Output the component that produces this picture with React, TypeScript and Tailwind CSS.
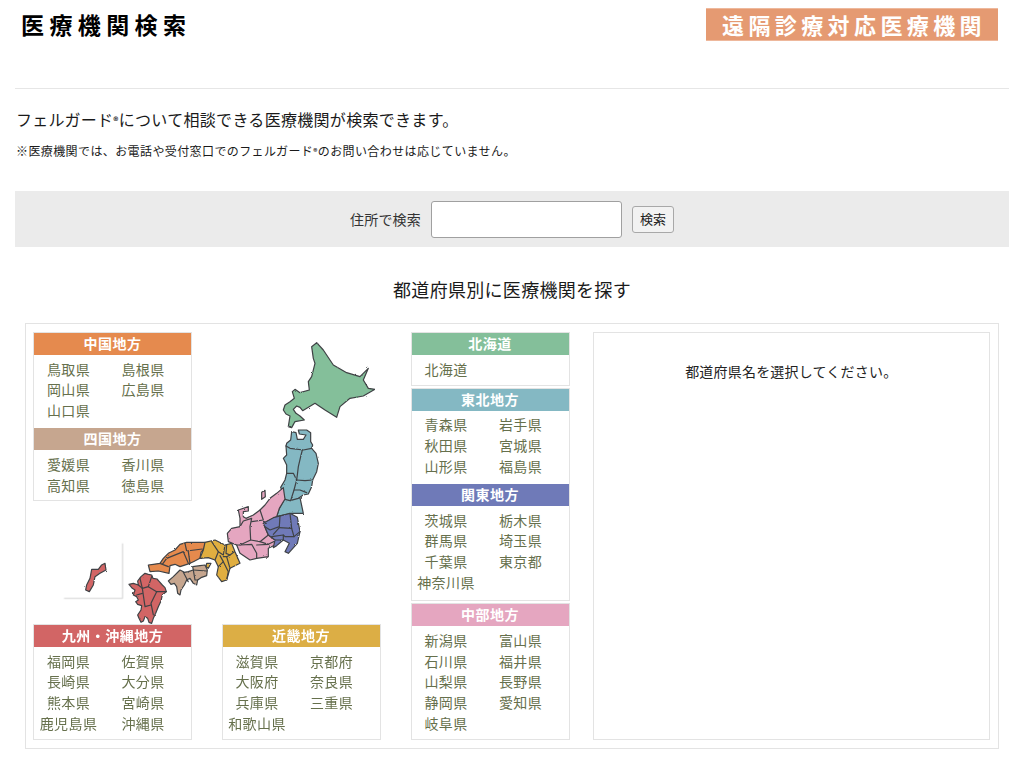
const regions = {
  chugoku: { name: "中国地方", color: "bg-[#e58a4e]", prefs: ["鳥取県", "島根県", "岡山県", "広島県", "山口県"], pb: "pb-[7.5px]" },
  shikoku: { name: "四国地方", color: "bg-[#c6a68f]", prefs: ["愛媛県", "香川県", "高知県", "徳島県"], pb: "pb-[5px]" },
  kyushu: { name: "九州・沖縄地方", color: "bg-[#d26565]", prefs: ["福岡県", "佐賀県", "長崎県", "大分県", "熊本県", "宮崎県", "鹿児島県", "沖縄県"], pb: "pb-[5.5px]" },
  kinki: { name: "近畿地方", color: "bg-[#dcae45]", prefs: ["滋賀県", "京都府", "大阪府", "奈良県", "兵庫県", "三重県", "和歌山県"], pb: "pb-[5.5px]" },
  hokkaido: { name: "北海道", color: "bg-[#84bf9a]", prefs: ["北海道"], pb: "pb-[5.5px]" },
  tohoku: { name: "東北地方", color: "bg-[#84b8c3]", prefs: ["青森県", "岩手県", "秋田県", "宮城県", "山形県", "福島県"], pb: "pb-[7.5px]" },
  kanto: { name: "関東地方", color: "bg-[#6f7ab8]", prefs: ["茨城県", "栃木県", "群馬県", "埼玉県", "千葉県", "東京都", "神奈川県"], pb: "pb-[7.5px]" },
  chubu: { name: "中部地方", color: "bg-[#e5a6c0]", prefs: ["新潟県", "富山県", "石川県", "福井県", "山梨県", "長野県", "静岡県", "愛知県", "岐阜県"], pb: "pb-[5.5px]" },
};

type Region = (typeof regions)[keyof typeof regions];

function Section({ region }: { region: Region }) {
  return (
    <div>
      <h3 className={`${region.color} h-[22px] text-center text-[14px] leading-[21px] font-bold tracking-[0.5px] text-white`}>
        {region.name}
      </h3>
      <ul className={`grid grid-cols-[69px_69px] gap-x-[5.5px] pt-[3.5px] ${region.pb}`}>
        {region.prefs.map((p) => (
          <li key={p} className="text-center text-[14px] leading-[20.75px] tracking-[0.4px] whitespace-nowrap text-[#66704c]">
            {p}
          </li>
        ))}
      </ul>
    </div>
  );
}

function Card({ items }: { items: Region[] }) {
  return (
    <div className="w-[159px] border border-[#e3e3e3] bg-white">
      {items.map((r) => (
        <Section key={r.name} region={r} />
      ))}
    </div>
  );
}

const stroke = "#3f4245";

function Shape({ fill, outer, inner = [] }: { fill: string; outer: string; inner?: string[] }) {
  return (
    <g strokeLinejoin="round" strokeLinecap="round" stroke={stroke} strokeWidth={3.6}>
      <polygon points={outer} fill={fill} />
      {inner.map((l) => (
        <polyline key={l} points={l} fill="none" />
      ))}
    </g>
  );
}

function JapanMap() {
  return (
    <svg viewBox="34 332 348 408" className="pointer-events-none absolute top-0 left-px h-[408px] w-[348px]">
      <defs>
        <filter id="coast" x="-5%" y="-5%" width="110%" height="110%">
          <feTurbulence type="fractalNoise" baseFrequency="0.35" numOctaves="2" seed="4" result="n" />
          <feDisplacementMap in="SourceGraphic" in2="n" scale="2" />
          <feGaussianBlur stdDeviation="0.25" />
        </filter>
      </defs>
      <g filter="url(#coast)">
        {/* 北海道 */}
        <g transform="translate(200 330) scale(0.3333)">
          <Shape
            fill="#84bf9a"
            outer="350,38 335,50 340,85 345,100 335,140 325,155 328,180 300,188 285,178 277,185 283,205 270,215 255,225 250,240 258,252 270,258 265,290 275,293 285,275 313,270 300,258 288,250 280,238 290,228 300,232 308,242 345,220 375,240 410,262 420,230 450,205 490,198 525,178 505,175 490,150 505,115 480,140 440,128 400,105 370,60"
          />
        </g>
        {/* 東北 */}
        <g transform="translate(220 485) scale(0.3333)">
          <Shape fill="#84b8c3" outer="170,95 178,70 195,40 240,38 250,85 215,85" />
        </g>
        <g transform="translate(270 430) scale(0.3333)">
          <Shape
            fill="#84b8c3"
            outer="65,5 78,8 82,28 100,28 108,15 88,12 85,0 110,0 122,8 122,35 128,45 125,55 138,70 145,100 140,125 128,150 125,170 115,192 100,195 85,205 60,212 45,208 32,172 45,150 50,130 50,105 40,85 50,75 48,48 50,40 62,30"
            inner={[
              "48,48 60,55 100,60 125,55",
              "97,60 92,80 85,110 82,135 80,150",
              "50,130 70,130 80,150 72,180 62,212",
              "80,150 105,152 128,150",
              "72,180 90,180 110,188",
            ]}
          />
        </g>
        {/* 中部 */}
        <g transform="translate(220 485) scale(0.3333)">
          <Shape
            fill="#e5a6c0"
            outer="190,8 170,25 150,40 135,60 120,75 100,90 78,100 70,95 70,80 85,78 85,65 55,75 60,100 60,125 35,130 22,145 25,170 50,180 60,205 90,225 110,220 145,215 145,190 165,180 165,165 145,150 130,115 170,95 178,70 195,42"
            inner={[
              "60,125 70,108 95,100 90,125 92,165 60,180 50,180",
              "120,75 130,105 95,110",
              "92,165 120,170 145,150",
              "120,170 145,178 165,168",
              "60,180 95,178 110,205 110,220",
              "110,180 145,178",
            ]}
          />
          <Shape fill="#e5a6c0" outer="125,22 135,16 136,35 125,43" />
        </g>
        {/* 関東 */}
        <g transform="translate(220 485) scale(0.3333)">
          <Shape
            fill="#6f7ab8"
            outer="130,115 160,98 210,85 232,97 240,140 232,175 205,205 195,200 208,175 190,165 170,182 160,188 165,165 145,150"
            inner={[
              "180,92 178,125 150,135 135,125",
              "210,85 215,130 178,128",
              "215,130 222,155 195,155 190,150 155,155",
              "190,150 190,165 165,165",
              "178,128 160,148",
              "222,155 240,140",
            ]}
          />
        </g>
        <g transform="translate(125 535) scale(0.3333)">
          {/* 中国 */}
          <Shape
            fill="#e58a4e"
            outer="70,90 85,88 105,85 115,70 130,55 150,45 165,28 185,22 240,22 238,40 228,52 225,70 205,80 195,85 165,95 150,88 135,92 132,115 100,108 75,110"
            inner={[
              "105,85 130,95",
              "112,88 125,70 175,50 190,85",
              "180,25 185,48 232,42",
              "190,50 195,85",
            ]}
          />
          {/* 近畿 */}
          <Shape
            fill="#e0ae40"
            outer="240,22 270,15 300,30 320,25 330,50 345,85 315,100 305,135 290,140 275,120 280,95 270,75 250,68 225,70 235,45"
            inner={[
              "260,20 280,50 270,75",
              "280,50 295,60 300,30",
              "305,30 303,55 315,60 328,50",
              "285,62 295,80 280,95",
              "295,80 310,110 305,135",
              "295,65 305,65 315,100",
              "305,65 315,60",
            ]}
          />
          <Shape fill="#e0ae40" outer="245,85 258,85 250,100 243,95" />
          {/* 四国 */}
          <Shape
            fill="#c6a68f"
            outer="130,138 145,125 165,105 178,112 190,110 205,105 203,95 225,92 240,90 247,105 245,122 228,128 218,135 215,150 205,145 195,130 185,135 178,150 168,165 165,180 158,175 155,155 148,145 138,148"
            inner={["175,112 190,140 185,135", "205,105 245,108", "205,105 210,135 218,135"]}
          />
          {/* 九州 */}
          <Shape
            fill="#d26565"
            outer="60,115 70,118 80,120 84,130 96,132 103,140 112,150 120,158 124,170 112,180 108,198 100,215 92,235 85,250 80,265 72,262 68,250 60,245 55,258 48,262 42,250 38,240 48,225 50,212 38,208 32,200 40,195 35,185 25,180 30,165 22,160 12,148 25,145 40,150 38,138 48,125"
            inner={[
              "45,130 52,160 70,155 80,125",
              "70,155 95,170 124,170",
              "95,170 78,205 85,240",
              "52,160 60,215 78,210",
              "40,150 52,160",
              "35,180 52,175",
            ]}
          />
        </g>
        {/* 沖縄 */}
        <g transform="translate(50 470) scale(0.3333)">
          <Shape fill="#d26565" outer="165,280 168,300 150,310 135,320 130,345 118,365 107,360 110,345 120,325 125,298 145,298 155,285" />
        </g>
      </g>
      <g transform="translate(50 470) scale(0.3333)">
        <line x1="218" y1="220" x2="218" y2="385" stroke="#dcdcdc" strokeWidth={4} />
        <line x1="42" y1="385" x2="218" y2="385" stroke="#dcdcdc" strokeWidth={4} />
      </g>
    </svg>
  );
}

export default function App() {
  return (
    <div className="min-h-[761px] bg-white px-[15px] font-['Noto_Sans_CJK_JP','Noto_Sans_CJK_SC',sans-serif] text-[#1a1a1a]">
      <header className="flex items-start justify-between pt-2 pr-[11px] pl-[6px]">
        <h1 className="text-[23px] leading-[32px] font-bold tracking-[5.4px] text-black">医療機関検索</h1>
        <div className="flex h-[33px] w-[292px] items-center justify-center border-y border-[#eeb89c] bg-[#e59a72] pl-[4px] text-[22px] font-bold tracking-[4.4px] text-white">
          遠隔診療対応医療機関
        </div>
      </header>

      <hr className="mt-[47px] border-t border-[#e6e6e6]" />

      <p className="mt-[18px] pl-px text-[16px] leading-[24px] tracking-[0.3px]">
        フェルガード<span className="text-[10px] font-bold align-[1px]">®</span>について相談できる医療機関が検索できます。
      </p>
      <p className="mt-[9px] pl-px text-[12px] leading-[18px] tracking-[0.4px]">
        ※医療機関では、お電話や受付窓口でのフェルガード<span className="text-[8px] font-bold align-[1px]">®</span>のお問い合わせは応じていません。
      </p>

      <div className="mt-[30px] flex h-[56px] items-center justify-center gap-[10px] bg-[#ebebeb]">
        <label className="text-[14px] tracking-[0.2px] text-[#333]">住所で検索</label>
        <input className="h-[37px] w-[191px] rounded-[3px] border border-[#a0a0a0] bg-white" />
        <button className="h-[27px] w-[42px] rounded-[3px] border border-[#a8a8a8] bg-[#f2f2f2] text-[13px] text-[#222]">
          検索
        </button>
      </div>

      <h2 className="mt-[29px] text-center text-[18px] leading-[27px] font-normal tracking-[0.3px]">都道府県別に医療機関を探す</h2>

      <div className="mx-[10px] mt-[20px] flex h-[426px] border border-[#e3e3e3] py-2 pr-2 pl-[7px]">
        <div className="relative flex h-[408px] w-[349px] flex-col justify-between">
          <JapanMap />
          <div className="relative">
            <Card items={[regions.chugoku, regions.shikoku]} />
          </div>
          <div className="relative flex justify-between pr-px">
            <Card items={[regions.kyushu]} />
            <Card items={[regions.kinki]} />
          </div>
        </div>
        <div className="ml-[29px] flex w-[159px] flex-col justify-between">
          <Card items={[regions.hokkaido]} />
          <Card items={[regions.tohoku, regions.kanto]} />
          <Card items={[regions.chubu]} />
        </div>
        <div className="ml-[23px] h-[408px] w-[398px] border border-[#e3e3e3] pt-[26px] text-center text-[14px] leading-[24px] tracking-[0.2px] text-[#222]">
          都道府県名を選択してください。
        </div>
      </div>
    </div>
  );
}
